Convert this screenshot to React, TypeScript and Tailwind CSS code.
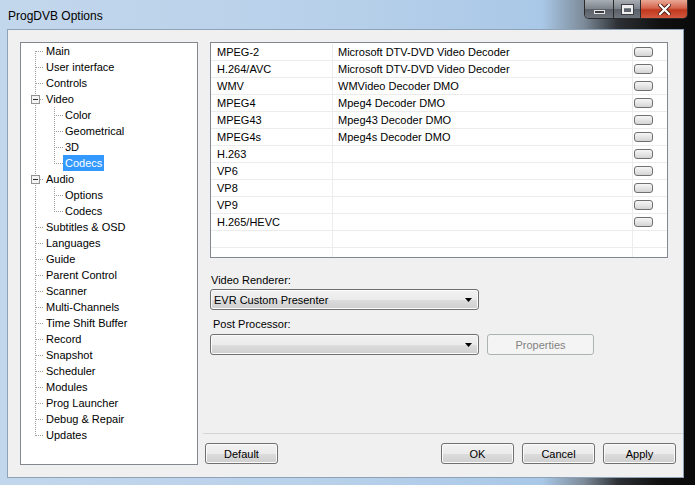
type TreeNode = {
  label: string;
  level: 0 | 1;
  first?: boolean;
  last?: boolean;
  expand?: boolean;
  childLast?: boolean;
  selected?: boolean;
};

const tree: TreeNode[] = [
  { label: "Main", level: 0, first: true },
  { label: "User interface", level: 0 },
  { label: "Controls", level: 0 },
  { label: "Video", level: 0, expand: true },
  { label: "Color", level: 1 },
  { label: "Geometrical", level: 1 },
  { label: "3D", level: 1 },
  { label: "Codecs", level: 1, childLast: true, selected: true },
  { label: "Audio", level: 0, expand: true },
  { label: "Options", level: 1 },
  { label: "Codecs", level: 1, childLast: true },
  { label: "Subtitles & OSD", level: 0 },
  { label: "Languages", level: 0 },
  { label: "Guide", level: 0 },
  { label: "Parent Control", level: 0 },
  { label: "Scanner", level: 0 },
  { label: "Multi-Channels", level: 0 },
  { label: "Time Shift Buffer", level: 0 },
  { label: "Record", level: 0 },
  { label: "Snapshot", level: 0 },
  { label: "Scheduler", level: 0 },
  { label: "Modules", level: 0 },
  { label: "Prog Launcher", level: 0 },
  { label: "Debug & Repair", level: 0 },
  { label: "Updates", level: 0, last: true },
];

const codecs: [string, string][] = [
  ["MPEG-2", "Microsoft DTV-DVD Video Decoder"],
  ["H.264/AVC", "Microsoft DTV-DVD Video Decoder"],
  ["WMV", "WMVideo Decoder DMO"],
  ["MPEG4", "Mpeg4 Decoder DMO"],
  ["MPEG43", "Mpeg43 Decoder DMO"],
  ["MPEG4s", "Mpeg4s Decoder DMO"],
  ["H.263", ""],
  ["VP6", ""],
  ["VP8", ""],
  ["VP9", ""],
  ["H.265/HEVC", ""],
];

const dot = { stroke: "#a0a0a0", strokeWidth: 1, strokeDasharray: "1 1" };

function Connector({ node }: { node: TreeNode }) {
  if (node.level === 0) {
    return (
      <svg width="23" height="16" className="shrink-0">
        <line x1="14.5" y1={node.first ? 8 : 0} x2="14.5" y2={node.last ? 9 : 16} {...dot} />
        <line x1={node.expand ? 19 : 15} y1="8.5" x2="23" y2="8.5" {...dot} />
        {node.expand && (
          <g>
            <rect x="10.5" y="4.5" width="8" height="8" fill="#f4f4f4" stroke="#919191" />
            <line x1="12" y1="8.5" x2="17" y2="8.5" stroke="#2b2b2b" />
          </g>
        )}
      </svg>
    );
  }
  return (
    <svg width="42" height="16" className="shrink-0">
      <line x1="14.5" y1="0" x2="14.5" y2="16" {...dot} />
      <line x1="33.5" y1="0" x2="33.5" y2={node.childLast ? 9 : 16} {...dot} />
      <line x1="35" y1="8.5" x2="42" y2="8.5" {...dot} />
    </svg>
  );
}

function WinButton({ label, className = "" }: { label: string; className?: string }) {
  return (
    <div
      className={`h-[21px] flex items-center justify-center pt-[1px] rounded-[3px] border border-[#707070] bg-[linear-gradient(#f2f2f2_0%,#ebebeb_50%,#dddddd_51%,#cfcfcf_100%)] shadow-[inset_0_0_0_1px_#fbfbfb] text-[11px] text-black ${className}`}
    >
      {label}
    </div>
  );
}

function Combo({ value }: { value: string }) {
  return (
    <div className="w-[269px] h-[21px] flex items-center justify-between pl-[3px] pr-[6px] rounded-[3px] border border-[#707070] bg-[linear-gradient(#f2f2f2_0%,#ebebeb_50%,#dddddd_51%,#cfcfcf_100%)] shadow-[inset_0_0_0_1px_#fbfbfb] text-[11px] text-black">
      <span className="pt-[1px]">{value}</span>
      <svg width="7" height="4">
        <polygon points="0,0 7,0 3.5,4" fill="#000" />
      </svg>
    </div>
  );
}

function CellButton() {
  return (
    <div className="ml-[1px] w-[19px] h-[10px] rounded-[3px] border border-[#707070] bg-[linear-gradient(#f6f6f6_0%,#e6e6e6_50%,#d4d4d4_100%)]" />
  );
}

export default function App() {
  const rows = [...codecs, ["", ""], ["", ""]] as [string, string][];
  return (
    <div className="w-[695px] h-[485px] flex flex-col overflow-hidden font-['Liberation_Sans',Arial,sans-serif] bg-[linear-gradient(90deg,#c3d7ec_0%,#b7d0ea_50%,#a9c8e7_78%,#7d8b99_84%,#2c2f33_89%,#101010_95%,#0a0a0a_100%)]">
      {/* title bar */}
      <div className="h-[29px] flex justify-between items-start">
        <div className="pl-[8px] pt-[9px] text-[12px] leading-[14px] text-black">ProgDVB Options</div>
        <div className="mr-[7px] flex h-[19px] rounded-b-[5px] border border-t-0 border-[#2a2a2a] overflow-hidden">
          <div className="w-[29px] flex items-center justify-center bg-[linear-gradient(#a9aeb5_0%,#7c828a_50%,#5b6068_51%,#6e747c_100%)] border-r border-[#2a2a2a]">
            <div className="mt-[6px] w-[11px] h-[4px] bg-[#3a3d42] border border-[#e8e8e8]" />
          </div>
          <div className="w-[27px] flex items-center justify-center bg-[linear-gradient(#a9aeb5_0%,#7c828a_50%,#5b6068_51%,#6e747c_100%)] border-r border-[#2a2a2a]">
            <div className="w-[11px] h-[9px] border-[2px] border-[#eeeeee] border-t-[3px] shadow-[0_0_0_1px_#3a3d42]" />
          </div>
          <div className="w-[46px] flex items-center justify-center bg-[linear-gradient(#e9a894_0%,#d5644d_45%,#c0391f_55%,#d3583f_100%)]">
            <svg width="13" height="11" viewBox="0 0 13 11">
              <path d="M2 1 L11 10 M11 1 L2 10" stroke="#4a1a10" strokeWidth="4" strokeLinecap="square" />
              <path d="M2 1 L11 10 M11 1 L2 10" stroke="#ffffff" strokeWidth="2.2" strokeLinecap="square" />
            </svg>
          </div>
        </div>
      </div>

      {/* client area */}
      <div className="ml-[7px] w-[677px] h-[449px] border border-[#8ea2b8] bg-[#f0f0f0] flex pl-[12px]">
        {/* tree */}
        <div className="mt-[12px] w-[178px] h-[423px] border border-[#828790] bg-white">
          {tree.map((n, i) => (
            <div key={i} className="flex h-[16px] items-start">
              <Connector node={n} />
              <span
                className={`px-[2px] pt-[1px] leading-[15px] h-[16px] text-[11px] whitespace-nowrap ${
                  n.selected ? "bg-[#3399ff] text-white" : "text-black"
                }`}
              >
                {n.label}
              </span>
            </div>
          ))}
        </div>

        {/* right side */}
        <div className="ml-[5px] w-[480px] flex flex-col">
          <div className="h-[404px] border-b border-[#d5d5d5] pl-[7px] pt-[12px]">
            {/* codec list */}
            <div className="w-[458px] h-[216px] border border-[#828790] bg-white pt-[1px] overflow-hidden">
              {rows.map(([a, b], i) => (
                <div key={i} className="flex h-[17px] border-b border-[#ececec] text-[11px] text-black">
                  <div className="w-[122px] pl-[6px] pt-[1px] border-r border-[#ececec] flex items-center">{a}</div>
                  <div className="w-[300px] pl-[5px] pt-[1px] border-r border-[#ececec] flex items-center whitespace-nowrap">{b}</div>
                  <div className="w-[34px] flex items-center">{i < codecs.length && <CellButton />}</div>
                </div>
              ))}
            </div>

            <div className="mt-[16px] pl-[1px] text-[11px] leading-[13px] text-black">Video Renderer:</div>
            <div className="mt-[2px]">
              <Combo value="EVR Custom Presenter" />
            </div>

            <div className="mt-[8px] pl-[3px] text-[11px] leading-[13px] text-black">Post Processor:</div>
            <div className="mt-[3px] flex">
              <Combo value="" />
              <div className="ml-[8px] w-[107px] h-[21px] flex items-center justify-center pt-[1px] rounded-[3px] border border-[#adb2b5] bg-[#f4f4f4] text-[11px] text-[#838383]">
                Properties
              </div>
            </div>
          </div>

          {/* buttons */}
          <div className="mt-[9px] flex pl-[2px] pr-[7px]">
            <WinButton label="Default" className="w-[73px]" />
            <div className="ml-auto flex gap-[8px]">
              <WinButton label="OK" className="w-[73px]" />
              <WinButton label="Cancel" className="w-[73px]" />
              <WinButton label="Apply" className="w-[73px]" />
            </div>
          </div>
        </div>
      </div>
    </div>
  );
}
